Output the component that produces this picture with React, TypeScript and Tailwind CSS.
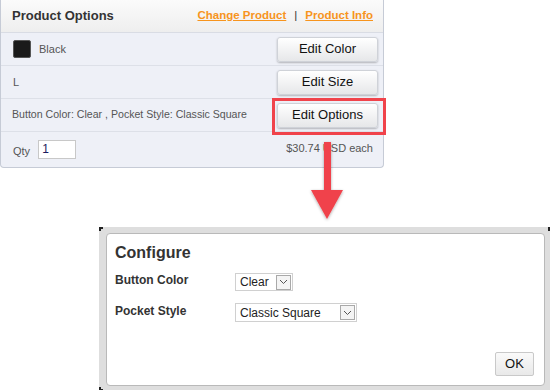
import React from "react";

const font = { fontFamily: '"Liberation Sans", Arial, sans-serif' };

function EditButton({ label }: { label: string }) {
  return (
    <div className="flex h-[25px] w-[101px] items-center justify-center rounded-[3px] border border-[#cfd2d8] bg-gradient-to-b from-[#ffffff] to-[#e6e7e9] text-[13px] text-[#111] shadow-[0_1px_2px_rgba(0,0,0,0.25)]">
      {label}
    </div>
  );
}

function Chevron() {
  return (
    <svg width="9" height="6" viewBox="0 0 9 6">
      <path d="M1 1 L4.5 4.5 L8 1" fill="none" stroke="#555" strokeWidth="1" />
    </svg>
  );
}

function FakeSelect({ value, cls }: { value: string; cls: string }) {
  return (
    <div className={`flex items-center justify-between border border-[#d0d0d0] bg-white pl-[4px] pr-[1px] text-[12px] text-[#222] ${cls}`}>
      <span>{value}</span>
      <span className="flex h-[15px] w-[15px] items-center justify-center border border-[#a9a9a9] bg-[#f4f4f4]">
        <Chevron />
      </span>
    </div>
  );
}

export default function App() {
  return (
    <div className="relative h-[390px] w-[550px] overflow-hidden bg-white" style={font}>
      {/* Product options panel */}
      <div className="w-[384px] overflow-hidden rounded-b-[4px] border border-t-0 border-[#c6cbd6] bg-[#eef0f7]">
        <div className="flex h-[33px] items-center justify-between border-b border-[#d9dce4] bg-gradient-to-b from-[#fbfbfb] to-[#eeeeee] pl-[11px] pr-[10px]">
          <span className="text-[13px] font-bold text-[#333]">Product Options</span>
          <div className="flex items-center gap-[8px] text-[11.5px] font-bold">
            <span className="text-[#f7941d] underline">Change Product</span>
            <span className="font-normal text-[#333]">|</span>
            <span className="text-[#f7941d] underline">Product Info</span>
          </div>
        </div>
        <div className="flex h-[33px] items-center justify-between border-b border-[#dde0e8] pl-[12px] pr-[5px]">
          <div className="flex items-center gap-[8px]">
            <div className="h-[18px] w-[18px] rounded-[2px] border border-[#555] bg-[#1a1a1a]" />
            <span className="text-[11px] text-[#555]">Black</span>
          </div>
          <EditButton label="Edit Color" />
        </div>
        <div className="flex h-[33px] items-center justify-between border-b border-[#dde0e8] pl-[12px] pr-[5px]">
          <span className="text-[11px] text-[#555]">L</span>
          <EditButton label="Edit Size" />
        </div>
        <div className="flex h-[33px] items-center justify-between border-b border-[#dde0e8] pl-[11px] pr-[5px]">
          <span className="text-[10.6px] text-[#555]">Button Color: Clear , Pocket Style: Classic Square</span>
          <EditButton label="Edit Options" />
        </div>
        <div className="flex h-[35px] items-start justify-between pl-[12px] pr-[10px] pt-[7px]">
          <div className="flex items-center gap-[8px]">
            <span className="mt-[4px] text-[11px] text-[#555]">Qty</span>
            <div className="flex h-[19px] w-[38px] items-center border border-[#c8c8c8] bg-white pl-[3px] text-[12px] text-[#1a1a60]">1</div>
          </div>
          <span className="mt-[1px] text-[11px] text-[#555]">$30.74 USD each</span>
        </div>
      </div>

      {/* red highlight around Edit Options */}
      <div className="absolute left-[272px] top-[98px] h-[37px] w-[114px] border-[3px] border-[#f0434b]" />

      {/* arrow */}
      <svg className="absolute left-[306px] top-[140px]" width="42" height="84" viewBox="0 0 42 84">
        <defs>
          <filter id="sh" x="-30%" y="-10%" width="160%" height="130%">
            <feDropShadow dx="0" dy="1" stdDeviation="1.5" floodColor="#000" floodOpacity="0.35" />
          </filter>
        </defs>
        <g filter="url(#sh)">
          <rect x="18" y="2" width="7" height="50" fill="#f0434b" />
          <path d="M5 50 L37 50 L21 79 Z" fill="#f0434b" />
        </g>
      </svg>

      {/* Configure dialog */}
      <div className="relative ml-[99px] mt-[59px] h-[164px] w-[451px] bg-[#dedede] pb-[5px] pl-[7px] pr-[5px] pt-[6px]">
        <div className="absolute left-0 top-0 h-[4px] w-[2px] bg-[#222]" />
        <div className="absolute left-0 top-0 h-[2px] w-[4px] bg-[#222]" />
        <div className="absolute right-0 top-0 h-[4px] w-[2px] bg-[#222]" />
        <div className="absolute bottom-0 left-0 h-[4px] w-[2px] bg-[#222]" />
        <div className="absolute bottom-0 left-0 h-[2px] w-[4px] bg-[#222]" />
        <div className="relative h-full w-full rounded-[4px] border border-[#b9b9b9] bg-white">
          <div className="pl-[8px] pt-[7px] text-[16px] font-bold leading-[24px] text-[#333]">Configure</div>
          <div className="mt-[8px] flex items-start pl-[8px]">
            <span className="w-[120px] text-[12px] font-bold leading-[14px] text-[#333]">Button Color</span>
            <FakeSelect value="Clear" cls="h-[18px] w-[58px]" />
          </div>
          <div className="mt-[12px] flex items-start pl-[8px]">
            <span className="mt-[1px] w-[120px] text-[12px] font-bold leading-[14px] text-[#333]">Pocket Style</span>
            <FakeSelect value="Classic Square" cls="h-[19px] w-[122px]" />
          </div>
          <div className="absolute bottom-[9px] right-[10px] flex h-[24px] w-[39px] items-center justify-center rounded-[2px] border border-[#c9c9c9] bg-gradient-to-b from-[#fafafa] to-[#e9e9e9] text-[13px] text-[#111]">
            OK
          </div>
        </div>
      </div>
    </div>
  );
}
